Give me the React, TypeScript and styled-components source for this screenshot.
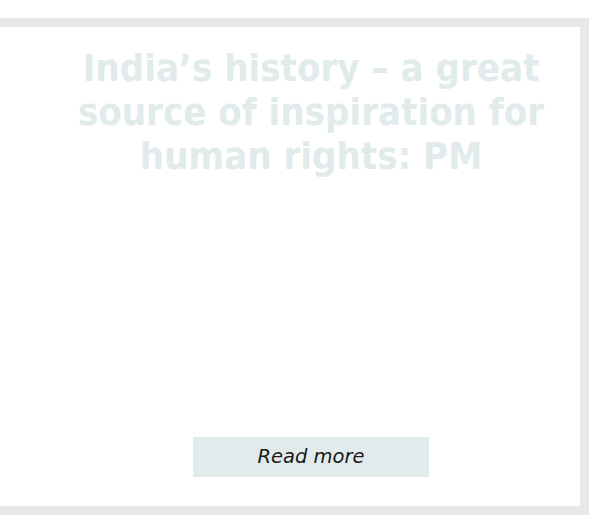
import React from "react";
import styled, { createGlobalStyle } from "styled-components";

const Global = createGlobalStyle`
  html, body { margin: 0; padding: 0; background: #ffffff; }
  body { width: 600px; height: 528px; overflow: hidden; }
`;

const Page = styled.div`
  padding-top: 18px;
  width: 600px;
  box-sizing: border-box;
`;

const Card = styled.article`
  width: 589px;
  height: 497px;
  box-sizing: border-box;
  border: 9px solid #e8e8e8;
  border-left: none;
  background: #ffffff;
  display: flex;
  flex-direction: column;
  align-items: center;
  padding: 19px 20px 29px 62px;
`;

const Title = styled.h1`
  margin: 0;
  font-family: "DejaVu Sans Condensed", "DejaVu Sans", sans-serif;
  font-weight: 700;
  font-size: 38px;
  line-height: 44px;
  color: #e1ebeb;
  text-align: center;
  max-width: 480px;
`;

const Spacer = styled.div`
  flex: 1;
`;

const ReadMore = styled.a`
  display: flex;
  align-items: center;
  justify-content: center;
  width: 236px;
  height: 40px;
  padding-bottom: 1px;
  box-sizing: border-box;
  background: #e2ebeb;
  font-family: "DejaVu Sans", sans-serif;
  font-style: italic;
  font-size: 19.5px;
  color: #1a1a1a;
  text-decoration: none;
`;

export default function App() {
  return (
    <>
      <Global />
      <Page>
        <Card>
          <Title>India’s history – a great source of inspiration for human rights: PM</Title>
          <Spacer />
          <ReadMore href="#">Read more</ReadMore>
        </Card>
      </Page>
    </>
  );
}
